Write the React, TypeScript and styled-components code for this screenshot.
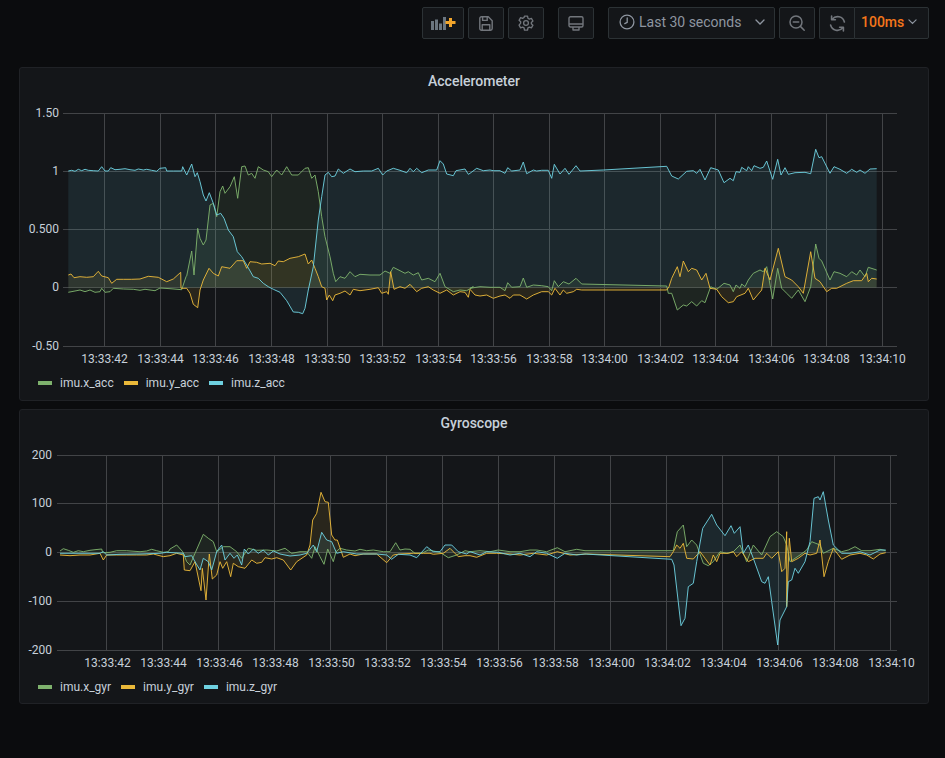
import React from 'react';
import styled, { createGlobalStyle } from 'styled-components';

const Global = createGlobalStyle`
  html, body { margin: 0; padding: 0; background: #0b0c0e; height: 100%; overflow: hidden; }
  body { font-family: Roboto, "Liberation Sans", sans-serif; color: #c7d0d9; }
`;

const Page = styled.div`
  width: 945px;
  height: 758px;
  box-sizing: border-box;
  padding: 7px 16px 0 19px;
  background: #0b0c0e;
  display: flex;
  flex-direction: column;
`;

const Toolbar = styled.div`
  display: flex;
  justify-content: flex-end;
  height: 32px;
  margin-bottom: 28px;
`;

const ToolGroup = styled.div<{ $gap?: number }>`
  display: flex;
  gap: 4px;
  margin-left: ${p => p.$gap ?? 14}px;
`;

const ToolButton = styled.div<{ $w?: number }>`
  box-sizing: border-box;
  width: ${p => p.$w ?? 36}px;
  height: 32px;
  background: #141619;
  border: 1px solid #2c3235;
  border-radius: 2px;
  display: flex;
  align-items: center;
  justify-content: center;
  color: #72767c;
`;

const TimePicker = styled(ToolButton)`
  width: 167px;
  justify-content: flex-start;
  padding: 0 0 2px 10px;
  gap: 4px;
  font-size: 14px;
  color: #8e95a0;
`;

const PickerChevron = styled.span`
  margin-left: auto;
  margin-right: 9px;
  display: flex;
`;

const Split = styled.div`
  display: flex;
`;

const RefreshButton = styled(ToolButton)`
  width: 35px;
  border-radius: 2px 0 0 2px;
  border-right: none;
`;

const RateButton = styled(ToolButton)`
  width: 75px;
  border-radius: 0 2px 2px 0;
  justify-content: flex-start;
  padding: 0 0 2px 6px;
  gap: 4px;
  font-size: 14px;
  font-weight: 500;
  color: #f4761b;
`;

const Panel = styled.section<{ $h: number }>`
  box-sizing: border-box;
  width: 910px;
  height: ${p => p.$h}px;
  margin-bottom: 8px;
  background: #141619;
  border: 1px solid #202226;
  border-radius: 3px;
  display: flex;
  flex-direction: column;
`;

const PanelTitle = styled.h2`
  margin: 0;
  height: 26px;
  line-height: 26px;
  text-align: center;
  font-size: 14px;
  font-weight: 500;
  color: #c7d0d9;
`;

const ChartSvg = styled.svg`
  display: block;
  width: 908px;
  flex: none;
`;

const Legend = styled.div<{ $top: number }>`
  display: flex;
  align-items: center;
  gap: 10px;
  padding: ${p => p.$top}px 0 0 18px;
  height: 22px;
  font-size: 12px;
  color: #c7d0d9;
`;

const LegendItem = styled.div`
  display: flex;
  align-items: center;
  gap: 8px;
`;

const Swatch = styled.i<{ $c: string }>`
  display: block;
  width: 14px;
  height: 4px;
  background: ${p => p.$c};
`;

const GREEN = '#7eb26d';
const YELLOW = '#eab839';
const BLUE = '#6ed0e0';

type Pt = [number, number];

const parse = (left: string, right: string, originY: number): Pt[] => {
  const read = (s: string, dx: number) =>
    s.trim().split(/\s+/).map(p => {
      const [x, y] = p.split(',').map(Number);
      return [(x + dx) / 3, originY + y / 3] as Pt;
    });
  return [...read(left, 0), ...read(right, 1410)];
};

const accX = parse(
  '205,697 225,693 240,690 255,695 270,690 285,697 300,695 305,685 315,697 330,695 340,685 370,687 400,688 420,691 435,688 450,690 465,692 480,684 510,686 545,689 558,650 560,648 575,573 582,645 593,505 600,535 610,555 618,540 630,435 640,430 650,470 660,395 668,378 675,400 690,380 703,350 713,415 725,320 735,318 745,345 755,340 765,355 775,320 790,330 805,335 815,350 830,330 845,345 860,320 875,345 895,345 915,325 925,323 935,355 945,345 955,395 965,470 975,530 990,590 1000,640 1007,665 1020,650 1035,655 1050,635 1065,650 1080,643 1110,645 1140,645 1155,633 1170,640 1180,622 1200,632 1215,640 1225,635 1240,645 1255,638 1265,660 1285,655 1305,665 1320,640 1335,680 1360,695 1380,690 1400,692 1420,680',
  '0,685 30,680 60,682 90,682 105,692 113,668 125,682 150,680 160,654 170,682 190,675 215,677 235,680 245,692 253,662 265,680 280,665 297,672 318,655 335,672 590,678 595,700 605,700 622,750 640,735 650,738 665,725 680,738 695,722 705,728 722,680 740,688 762,670 780,675 790,695 798,675 810,685 815,672 825,680 835,660 850,640 870,630 880,635 890,620 908,717 923,625 935,685 950,700 965,715 985,690 1005,725 1022,680 1037,552 1047,595 1055,603 1080,660 1092,635 1110,640 1130,650 1145,635 1160,645 1170,630 1185,650 1195,622 1220,630',
  60
);
const accY = parse(
  '205,645 213,642 222,653 240,650 260,652 280,650 295,634 305,648 325,653 335,670 350,658 370,658 395,658 420,657 445,649 475,652 500,665 520,657 542,637 543,685 560,685 570,700 580,733 593,743 600,690 610,660 627,625 640,640 655,648 665,620 690,625 710,602 730,602 740,625 750,605 770,607 785,612 810,610 825,617 835,603 850,605 870,595 895,590 915,582 925,612 935,600 945,625 955,650 965,680 975,685 980,720 988,705 998,722 1005,705 1020,700 1035,693 1050,705 1060,688 1080,692 1110,688 1135,683 1145,700 1160,695 1165,703 1172,635 1182,688 1200,680 1215,685 1230,673 1250,695 1265,685 1285,680 1300,690 1320,700 1340,690 1360,705 1380,695 1395,697 1405,712',
  '0,688 15,705 30,708 50,705 70,715 90,708 105,705 120,715 130,705 150,705 170,717 190,705 215,695 235,695 245,705 255,685 270,705 280,690 290,700 310,695 320,688 335,690 590,690 597,680 605,655 622,620 630,650 640,603 655,635 665,625 680,630 695,660 708,640 720,685 740,688 755,710 775,728 790,725 800,710 825,700 835,685 850,720 875,690 885,625 900,660 925,565 945,650 965,660 985,680 1000,700 1022,575 1035,655 1050,665 1070,695 1085,685 1100,685 1130,670 1150,662 1175,662 1190,640 1195,665 1205,655 1220,657',
  60
);
const accZ = parse(
  '205,333 215,331 225,334 235,328 245,332 255,328 265,331 280,332 295,333 305,320 315,333 325,333 332,323 345,329 360,328 375,326 390,329 405,331 415,327 430,330 440,328 455,331 470,334 480,325 497,323 500,333 520,333 545,333 548,320 560,345 575,312 585,350 592,338 600,365 610,405 618,423 628,398 640,430 650,465 662,460 672,475 685,510 700,530 712,575 725,590 740,615 760,650 775,655 790,670 805,680 820,688 840,697 860,722 880,756 895,757 908,761 915,745 925,690 940,620 955,480 965,410 975,345 985,337 995,350 1005,348 1015,327 1030,340 1050,327 1065,335 1090,333 1115,333 1135,325 1148,345 1160,333 1180,325 1200,331 1220,338 1230,325 1240,335 1250,325 1265,338 1285,330 1310,330 1320,302 1330,312 1340,342 1360,347 1368,332 1395,327 1405,343',
  '0,340 20,325 40,332 60,330 70,332 90,332 105,340 113,323 125,333 150,330 160,306 170,341 190,330 200,333 215,331 235,331 245,355 253,313 270,342 285,325 297,343 318,317 330,333 400,330 590,319 605,348 625,357 650,334 670,332 680,340 690,328 705,360 722,323 745,330 762,368 780,355 790,362 798,335 810,337 815,322 830,332 835,320 845,332 852,317 870,325 880,322 890,303 908,358 923,298 933,345 945,323 955,343 975,338 1005,337 1022,341 1037,268 1047,293 1055,290 1080,340 1092,320 1110,328 1130,340 1145,328 1160,337 1170,330 1185,340 1200,327 1220,326',
  60
);
const gyrX = parse(
  '180,438 190,431 205,436 220,442 235,437 250,440 270,436 285,434 305,432 308,443 330,442 350,437 380,437 420,440 440,438 455,433 470,437 490,442 505,440 510,432 530,420 548,440 560,470 570,480 585,445 610,388 625,400 640,410 650,440 670,425 690,425 710,440 725,460 745,430 770,436 800,435 830,438 855,430 875,445 900,440 920,440 935,460 945,425 960,455 972,478 983,432 1000,470 1008,440 1020,430 1040,435 1065,438 1080,433 1100,437 1120,435 1150,440 1170,440 1187,413 1200,435 1215,432 1230,433 1245,445 1265,445 1285,435 1320,442 1345,458 1370,450 1395,437',
  '0,440 30,437 60,440 85,435 120,440 150,440 180,435 200,435 230,440 262,428 285,440 320,433 345,437 610,437 622,380 640,360 650,425 665,405 680,420 700,475 715,482 730,470 750,440 770,445 790,440 810,420 830,470 850,420 875,450 900,395 920,380 940,395 950,420 960,470 990,450 1010,435 1025,410 1050,420 1060,445 1090,430 1115,440 1135,435 1155,425 1175,437 1200,437 1230,433 1247,437',
  405
);
const gyrY = parse(
  '180,450 210,452 240,450 270,450 300,445 310,465 320,450 350,450 380,450 410,450 440,450 460,447 490,455 510,452 530,445 550,450 553,495 570,497 585,470 603,557 607,490 618,585 628,447 637,522 650,510 660,470 668,490 680,470 692,515 700,475 715,485 735,490 755,465 770,475 785,472 795,458 815,462 830,458 850,465 872,495 890,470 920,450 930,420 938,345 950,325 963,262 975,290 985,292 995,390 1005,405 1012,405 1030,457 1050,447 1065,452 1090,447 1130,447 1160,473 1180,450 1200,447 1240,445 1270,445 1290,445 1300,448 1330,445 1350,430 1375,455 1395,452',
  '0,452 20,457 50,445 80,445 120,447 150,450 190,445 230,450 262,440 300,450 350,447 600,455 610,440 620,420 630,430 640,415 650,460 670,462 690,440 705,460 720,480 730,450 740,470 750,445 775,445 790,440 800,455 815,440 835,470 855,460 880,460 890,445 905,460 925,440 935,500 945,490 950,380 950,605 958,400 965,470 985,460 1005,445 1020,450 1040,445 1050,405 1055,450 1062,515 1075,470 1090,430 1115,463 1140,450 1170,445 1190,450 1210,462 1230,447 1247,443',
  405
);
const gyrZ = parse(
  '180,445 300,445 310,440 320,450 360,448 420,447 480,445 500,442 550,445 555,455 575,452 585,470 600,495 610,460 625,470 635,495 650,440 665,420 675,465 690,445 702,460 712,450 725,480 733,432 745,447 760,432 775,445 790,435 805,450 820,438 840,447 870,453 900,450 920,445 940,420 950,440 965,382 980,405 995,410 1010,445 1030,440 1070,447 1130,447 1160,450 1175,463 1195,448 1230,450 1250,458 1280,425 1300,440 1320,440 1335,420 1355,420 1375,440 1400,447',
  '0,440 30,450 50,440 85,442 120,450 150,445 180,455 200,440 230,445 262,460 285,445 320,450 345,447 605,463 612,480 633,662 645,640 655,545 670,535 680,470 698,370 725,328 740,360 765,392 783,362 793,385 810,365 820,445 835,420 850,460 875,530 885,535 895,515 905,590 923,720 930,645 950,605 955,530 965,525 975,490 985,505 1005,470 1020,410 1032,280 1045,275 1050,285 1060,260 1075,345 1090,420 1115,445 1140,445 1170,440 1200,450 1230,435 1247,435',
  405
);

const xLabels = ['13:33:42','13:33:44','13:33:46','13:33:48','13:33:50','13:33:52','13:33:54','13:33:56','13:33:58','13:34:00','13:34:02','13:34:04','13:34:06','13:34:08','13:34:10'];

type ChartProps = {
  view: string;
  height: number;
  left: number;
  labelRight: number;
  ticks: number[];
  yTicks: { y: number; label: string }[];
  zero: number;
  labelY: number;
  labelDx: number;
  series: { pts: Pt[]; color: string }[];
};

const Chart = ({ view, height, left, labelRight, ticks, yTicks, zero, labelY, labelDx, series }: ChartProps) => {
  const top = yTicks[0].y;
  const bottom = yTicks[yTicks.length - 1].y;
  const line = (p: Pt[]) => p.map(([x, y]) => `${x.toFixed(1)},${y.toFixed(1)}`).join(' ');
  return (
    <ChartSvg viewBox={view} height={height}>
      {yTicks.map(t => (
        <g key={t.label}>
          <line x1={left} x2={897} y1={t.y + 0.5} y2={t.y + 0.5} stroke="#424447" />
          <text x={labelRight} y={t.y + 4} textAnchor="end" fontSize="12" fill="#c7d0d9" fontFamily="Roboto, sans-serif">{t.label}</text>
        </g>
      ))}
      {ticks.map((x, i) => (
        <g key={x}>
          <line x1={x + 0.5} x2={x + 0.5} y1={top} y2={bottom + 1} stroke="#424447" />
          <text x={x + labelDx} y={labelY} textAnchor="middle" fontSize="12" fill="#c7d0d9" fontFamily="Roboto, sans-serif">{xLabels[i]}</text>
        </g>
      ))}
      {series.map(s => {
        const first = s.pts[0];
        const last = s.pts[s.pts.length - 1];
        return (
          <polygon key={s.color + 'f'} points={`${first[0]},${zero} ${line(s.pts)} ${last[0]},${zero}`} fill={s.color} fillOpacity={0.1} />
        );
      })}
      {series.map(s => (
        <polyline key={s.color} points={line(s.pts)} fill="none" stroke={s.color} strokeOpacity={0.92} strokeWidth={1} strokeLinejoin="round" />
      ))}
    </ChartSvg>
  );
};

const AddPanelIcon = () => (
  <svg width="25" height="14" viewBox="0 0 25 14">
    <rect x="0" y="5" width="3" height="9" fill="#6b7680" />
    <rect x="4" y="3.5" width="3" height="10.5" fill="#6b7680" />
    <rect x="8" y="7.5" width="3" height="6.5" fill="#6b7680" />
    <rect x="12" y="1" width="3" height="13" fill="#6b7680" />
    <path d="M18 2h3v3h3.5v3H21v3h-3V8h-3.5V5H18z" fill="#f2a52b" />
  </svg>
);

const SaveIcon = () => (
  <svg width="14" height="15" viewBox="0 0 14 15" fill="none" stroke="currentColor" strokeWidth="1.4" strokeLinejoin="round">
    <path d="M.8 2.5A1.7 1.7 0 0 1 2.5.8h6.8l3.9 3.9v7.8a1.7 1.7 0 0 1-1.7 1.7h-9A1.7 1.7 0 0 1 .8 12.5z" />
    <path d="M3.6 1v3.4h4.6V1M3.2 14V8.8h7.6V14" />
  </svg>
);

const GearIcon = () => (
  <svg width="16" height="16" viewBox="0 0 24 24" fill="none" stroke="currentColor" strokeWidth="2" strokeLinejoin="round">
    <path d="M9.7 1.6h4.6l.6 3.2 2.2 1.3 3-1.1 2.3 4-2.4 2.1v2l2.4 2.1-2.3 4-3-1.1-2.2 1.3-.6 3.2H9.7l-.6-3.2-2.2-1.3-3 1.1-2.3-4L4 12.1v-2L1.6 8l2.3-4 3 1.1 2.2-1.3z" />
    <circle cx="12" cy="12" r="3.6" />
  </svg>
);

const TvIcon = () => (
  <svg width="16" height="15" viewBox="0 0 16 15" fill="none" stroke="currentColor" strokeWidth="1.4" strokeLinejoin="round">
    <rect x="1" y=".8" width="14" height="10.2" rx="1.5" />
    <path d="M1 8h14M5 11v3h6v-3" />
  </svg>
);

const ClockIcon = () => (
  <svg width="16" height="16" viewBox="0 0 16 16" fill="none" stroke="currentColor" strokeWidth="1.3" strokeLinecap="round">
    <circle cx="8" cy="8" r="6.9" />
    <path d="M8.2 4v4.3L5.8 9.6" />
  </svg>
);

const Chevron = ({ w = 10 }: { w?: number }) => (
  <svg width={w} height={w * 0.6} viewBox="0 0 10 6" fill="none" stroke="#8e95a0" strokeWidth="1.3" strokeLinecap="round">
    <path d="M1 1l4 4 4-4" />
  </svg>
);

const ZoomIcon = () => (
  <svg width="16" height="16" viewBox="0 0 16 16" fill="none" stroke="currentColor" strokeWidth="1.5" strokeLinecap="round">
    <circle cx="7" cy="7" r="6" />
    <path d="M4.3 7h5.4M11.4 11.4l3.8 3.8" />
  </svg>
);

const RefreshIcon = () => (
  <svg width="17" height="17" viewBox="0 0 17 17" fill="none" stroke="currentColor" strokeWidth="1.6" strokeLinecap="round" strokeLinejoin="round">
    <path d="M3.2 4.2A7 7 0 0 1 15.4 7" />
    <path d="M2.6 1v3.8h3.8" />
    <path d="M13.8 12.8A7 7 0 0 1 1.6 10" />
    <path d="M14.4 16v-3.8h-3.8" />
  </svg>
);

const acc = {
  view: '20 94 908 276',
  height: 276,
  left: 63,
  labelRight: 59,
  ticks: [104, 160, 215, 271, 327, 382, 438, 493, 549, 604, 660, 715, 771, 826, 882],
  yTicks: [
    { y: 113, label: '1.50' },
    { y: 171, label: '1' },
    { y: 229, label: '0.500' },
    { y: 287, label: '0' },
    { y: 346, label: '-0.50' },
  ],
  zero: 287.5,
  labelY: 363,
  labelDx: 0.5,
  series: [
    { pts: accX, color: GREEN },
    { pts: accY, color: YELLOW },
    { pts: accZ, color: BLUE },
  ],
};

const gyr = {
  view: '20 436 908 240',
  height: 240,
  left: 57,
  labelRight: 52,
  ticks: [106, 162, 218, 274, 330, 386, 442, 498, 554, 610, 666, 722, 778, 834, 890],
  yTicks: [
    { y: 455, label: '200' },
    { y: 503, label: '100' },
    { y: 552, label: '0' },
    { y: 601, label: '-100' },
    { y: 650, label: '-200' },
  ],
  zero: 552.5,
  labelY: 667,
  labelDx: 1.5,
  series: [
    { pts: gyrX, color: GREEN },
    { pts: gyrY, color: YELLOW },
    { pts: gyrZ, color: BLUE },
  ],
};

const LegendRow = ({ names, top }: { names: [string, string][]; top: number }) => (
  <Legend $top={top}>
    {names.map(([name, color]) => (
      <LegendItem key={name}>
        <Swatch $c={color} />
        {name}
      </LegendItem>
    ))}
  </Legend>
);

export default function App() {
  return (
    <Page>
      <Global />
      <Toolbar>
        <ToolGroup>
          <ToolButton $w={42}><AddPanelIcon /></ToolButton>
        </ToolGroup>
        <ToolGroup $gap={4}>
          <ToolButton><SaveIcon /></ToolButton>
          <ToolButton><GearIcon /></ToolButton>
        </ToolGroup>
        <ToolGroup>
          <ToolButton><TvIcon /></ToolButton>
        </ToolGroup>
        <ToolGroup>
          <TimePicker>
            <ClockIcon />
            Last 30 seconds
            <PickerChevron><Chevron /></PickerChevron>
          </TimePicker>
          <ToolButton><ZoomIcon /></ToolButton>
          <Split>
            <RefreshButton><RefreshIcon /></RefreshButton>
            <RateButton>100ms <Chevron w={9} /></RateButton>
          </Split>
        </ToolGroup>
      </Toolbar>
      <Panel $h={334}>
        <PanelTitle>Accelerometer</PanelTitle>
        <Chart {...acc} />
        <LegendRow top={2} names={[['imu.x_acc', GREEN], ['imu.y_acc', YELLOW], ['imu.z_acc', BLUE]]} />
      </Panel>
      <Panel $h={295}>
        <PanelTitle>Gyroscope</PanelTitle>
        <Chart {...gyr} />
        <LegendRow top={0} names={[['imu.x_gyr', GREEN], ['imu.y_gyr', YELLOW], ['imu.z_gyr', BLUE]]} />
      </Panel>
    </Page>
  );
}
